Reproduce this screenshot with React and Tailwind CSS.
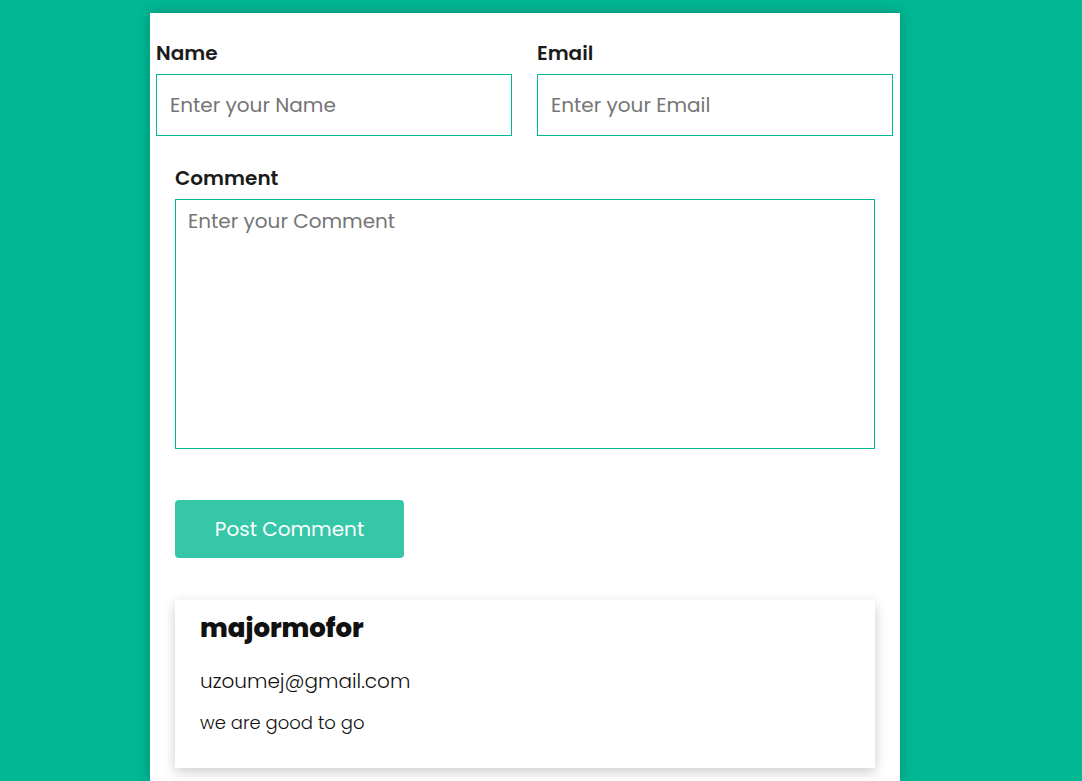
export default function App() {
  return (
    <div className="min-h-[781px] w-full bg-[#00b894] font-['Poppins','Open_Sans',sans-serif] overflow-hidden">
      <div className="ml-[150px] mt-[13px] w-[750px] bg-white shadow-[0_0_12px_rgba(0,0,0,0.25)] pt-[26px] pb-[13px]">
        <div className="flex gap-[25px] pl-[6px] pr-[7px]">
          <div className="flex-1 min-w-0 flex flex-col">
            <label className="text-[20px] font-semibold text-[#1b1b1b] leading-[28px] mb-[7px]">Name</label>
            <input className="w-full min-w-0 h-[62px] border border-[#00b894] px-[13px] text-[20px] outline-none placeholder:text-[#757575]" placeholder="Enter your Name" />
          </div>
          <div className="flex-1 min-w-0 flex flex-col">
            <label className="text-[20px] font-semibold text-[#1b1b1b] leading-[28px] mb-[7px]">Email</label>
            <input className="w-full min-w-0 h-[62px] border border-[#00b894] px-[13px] text-[20px] outline-none placeholder:text-[#757575]" placeholder="Enter your Email" />
          </div>
        </div>
        <div className="px-[25px] mt-[28px] flex flex-col">
          <label className="text-[20px] font-semibold text-[#1b1b1b] leading-[28px] mb-[7px]">Comment</label>
          <textarea className="h-[250px] border border-[#00b894] px-[12px] py-[7px] text-[20px] leading-[28px] outline-none resize-none placeholder:text-[#757575]" placeholder="Enter your Comment" />
          <button className="mt-[51px] w-[229px] h-[58px] rounded-[4px] bg-[#36c6a8] text-white text-[20px]">Post Comment</button>
          <div className="mt-[42px] h-[168px] bg-white shadow-[0_4px_12px_rgba(0,0,0,0.2)] px-[25px] pt-[11px]">
            <div className="text-[26px] font-extrabold text-[#111] leading-[34px]">majormofor</div>
            <div className="mt-[23px] text-[20px] font-light text-[#111] leading-[26px]">uzoumej@gmail.com</div>
            <div className="mt-[16px] text-[18px] font-light text-[#111] leading-[26px]">we are good to go</div>
          </div>
        </div>
      </div>
    </div>
  );
}
